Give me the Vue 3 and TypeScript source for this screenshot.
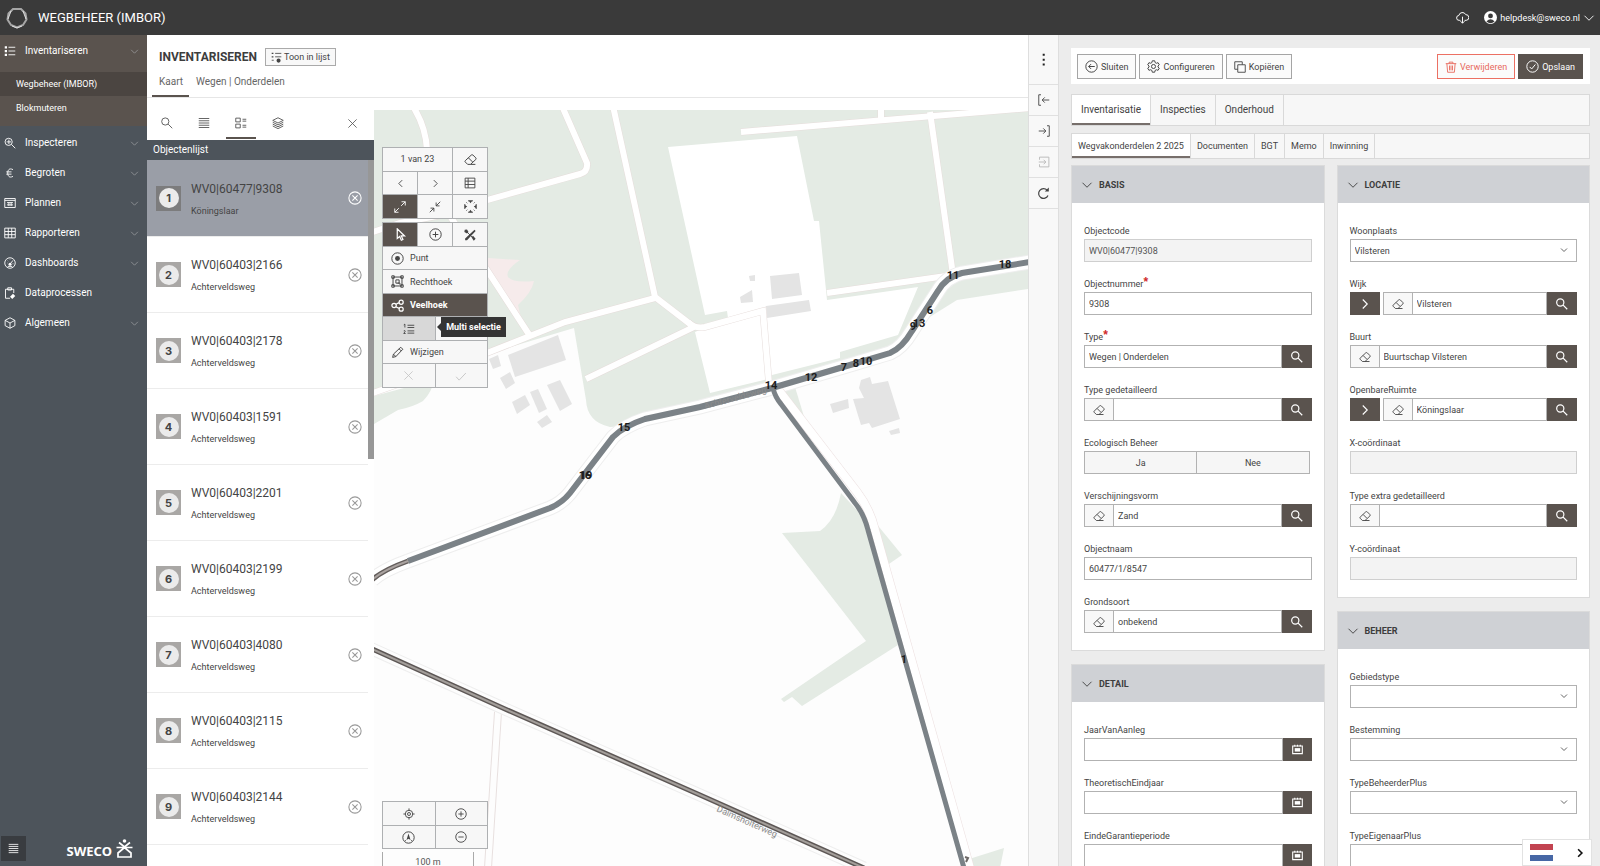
<script setup lang="ts">
import { h, ref } from 'vue'

type IconDef = { d: string; fill?: string }

const icons: Record<string, IconDef[]> = {
  list: [{ d: 'M6 3h9M6 8h9M6 13h9' }, { d: 'M1 1.500h3v3H1zM1 6.500h3v3H1zM1 11.500h3v3H1z', fill: 'currentColor' }],
  listdot: [{ d: 'M6 2h9M6 7h9M1 12h3' }, { d: 'M1 1h2.500v2H1zM1 6h2.500v2H1zM14 12.500a3 3 0 1 1-6 0a3 3 0 0 1 6 0', fill: 'currentColor' }],
  chevron: [{ d: 'M2 5l6 6 6-6' }],
  right: [{ d: 'M5 2l6 6-6 6' }],
  left: [{ d: 'M11 2L5 8l6 6' }],
  zoomplus: [{ d: 'M11 6.500a4.800 4.800 0 1 1-9.600 0a4.800 4.800 0 0 1 9.600 0M10 10l5 5M3.500 6.500h6M6.500 3.500v6' }],
  euro: [{ d: 'M12 3.500C7 1 5 4 5 8s2 7 7 4.500M3 6.500h7M3 9.500h7' }],
  calendar: [{ d: 'M1 3h14v11H1zM4 1v3M8 1v3M12 1v3' }, { d: 'M4 6h8v5H4z', fill: 'currentColor' }],
  plan: [{ d: 'M1 2h14v12H1zM1 4.500h14M4 7.500h8M4 10.500h8M6.500 7v5M9.500 7v5' }],
  grid: [{ d: 'M1 1.500h14v13H1zM1 6h14M1 10.200h14M5.700 1.500v13M10.300 1.500v13' }],
  gauge: [{ d: 'M15 8a7 7 0 1 1-14 0a7 7 0 0 1 14 0M8 9.500l4-5M4 8h.5M5 5l.5.5M8 3.500v.5M12.500 9h-1M5 12.500h6' }, { d: 'M10 9.500a2 2 0 1 1-4 0a2 2 0 0 1 4 0', fill: 'currentColor' }],
  clipboard: [{ d: 'M8 15H2V3h11v5M5 1h5v3H5z' }, { d: 'M8 13l4-4 3 3-4 4z', fill: 'currentColor' }],
  cube: [{ d: 'M8 1l6.500 3.500v7L8 15l-6.500-3.500v-7zM1.500 4.500L8 8l6.500-3.500M8 8v7' }],
  search: [{ d: 'M10.500 6a4.800 4.800 0 1 1-9.600 0a4.800 4.800 0 0 1 9.600 0M9.500 9.500L15 15' }],
  lines: [{ d: 'M1 2h14M1 5h14M1 8h14M1 11h14M1 14h14' }],
  cards: [{ d: 'M1 1.500h6v5H1zM1 9.500h6v5H1zM10 3h5M10 5.500h5M10 11h5M10 13.500h5' }],
  layers: [{ d: 'M8 1l7 3.500L8 8 1 4.500zM1 7l7 3.500L15 7M1 9.500L8 13l7-3.500M1 12l7 3.500 7-3.500' }],
  close: [{ d: 'M2 2l12 12M14 2L2 14' }],
  circlex: [{ d: 'M15 8a7 7 0 1 1-14 0a7 7 0 0 1 14 0M5 5l6 6M11 5l-6 6' }],
  circleplus: [{ d: 'M15 8a7 7 0 1 1-14 0a7 7 0 0 1 14 0M8 4.500v7M4.500 8h7' }],
  circleminus: [{ d: 'M15 8a7 7 0 1 1-14 0a7 7 0 0 1 14 0M4.500 8h7' }],
  circleleft: [{ d: 'M15 8a7 7 0 1 1-14 0a7 7 0 0 1 14 0M12 8H4.500M7.500 5l-3 3 3 3' }],
  circlecheck: [{ d: 'M15 8a7 7 0 1 1-14 0a7 7 0 0 1 14 0M4.500 8.500l2.500 2.500 4.500-5.500' }],
  eraser: [{ d: 'M1.500 9.500L9 2.500q1-.8 2 0l3.500 3.500q.8 1 0 2L8 14H4.500L1.500 11q-.8-.8 0-1.500M5.500 6l5 5M8 14h6' }],
  table: [{ d: 'M1.500 1.500h13v13h-13zM1.500 5.500h13M1.500 10h13M5.500 1.500v13' }],
  expand: [{ d: 'M9.500 6.500L15 1M10 1h5v5M6.500 9.500L1 15M1 10v5h5' }],
  shrink: [{ d: 'M9.500 6.500L15 1M9.500 2v4.500H14M6.500 9.500L1 15M2 9.500h4.500V14' }],
  extent: [{ d: 'M1 5v6M15 5v6M5 1h6M5 15h6M3 3l1 1M12 4l1-1M3 13l1-1M13 13l-1-1' }, { d: 'M6 1h4L8 4zM6 15h4L8 12zM1 6v4l3-2zM15 6v4l-3-2z', fill: 'currentColor' }],
  pointer: [{ d: 'M4 1v12l3-2.500 2 4.500 2-1-2-4.200h4z' }],
  tools: [{ d: 'M3 3l10 10' }, { d: 'M14 1l1.500 1.500L4 15H1.500v-2.500zM1 1l3-.5 2 3.500-2 2-3.500-2zM10 11l2-2 3.500 4-2.500 2.500z', fill: 'currentColor' }],
  point: [{ d: 'M15 8a7 7 0 1 1-14 0a7 7 0 0 1 14 0' }, { d: 'M11 8a3 3 0 1 1-6 0a3 3 0 0 1 6 0', fill: 'currentColor' }],
  rect: [{ d: 'M2.500 2.500h11v11h-11zM1 1h3v3H1zM12 1h3v3h-3zM1 12h3v3H1zM12 12h3v3h-3zM6 6h4v4H6zM8 10h3v2' }],
  poly: [{ d: 'M6.500 8a2.700 2.700 0 1 1-5.400 0a2.700 2.700 0 0 1 5.400 0M15 4a2.500 2.500 0 1 1-5 0a2.500 2.500 0 0 1 5 0M15 12.500a2.500 2.500 0 1 1-5 0a2.500 2.500 0 0 1 5 0M6 6.500l4-2M6 9.500l4 2' }],
  numlist: [{ d: 'M6 3h9M6 6h9M6 10.500h9M6 13.500h9M1 2.500l1.500-1V6M1 10.500q2-1 2 .5L1 14h2.500' }],
  pencil: [{ d: 'M2 14l1-4L12 1.500l2.500 2.500L6 13zM10 3.500L12.500 6M3 10l3 3' }],
  check: [{ d: 'M1.500 9l4 4.500L14.500 4' }],
  target: [{ d: 'M13 8a5 5 0 1 1-10 0a5 5 0 0 1 10 0M10 8a2 2 0 1 1-4 0a2 2 0 0 1 4 0M8 .5v3M8 12.500v3M.5 8h3M12.500 8h3' }],
  compass: [{ d: 'M15 8a7 7 0 1 1-14 0a7 7 0 0 1 14 0M5 11l-1 1M11 11l1 1' }, { d: 'M8 3l2.500 8L8 9.500 5.500 11z', fill: 'currentColor' }],
  gear: [{ d: 'M6.500 1h3l.5 2.200 1.500.8 2.100-.7 1.500 2.600-1.600 1.500v1.300l1.600 1.400-1.500 2.600-2.100-.7-1.500.8-.5 2.200h-3L6 12.800 4.500 12l-2.100.7L.9 10.100 2.500 8.700V7.400L.9 5.900l1.500-2.600L4.500 4 6 3.200zM10.500 8a2.500 2.500 0 1 1-5 0a2.500 2.500 0 0 1 5 0' }],
  copy: [{ d: 'M5 5h10v10H5zM11 5V1H1v10h4' }],
  trash: [{ d: 'M1 3.500h14M5.500 3.500v-2h5v2M2.500 3.500L3.500 15h9l1-11.500M6 6v6.500M8 6v6.500M10 6v6.500' }],
  dots: [{ d: 'M7 1h2.500v2.500H7zM7 7h2.500v2.500H7zM7 13h2.500v2.500H7z', fill: 'currentColor' }],
  outleft: [{ d: 'M4 1H1v14h3M15 8H6M9 4.500L5.500 8 9 11.500' }],
  inright: [{ d: 'M12 1h3v14h-3M1 8h9M7 4.500L10.500 8 7 11.500' }],
  boxright: [{ d: 'M2 5V1.500h12.500v13H2V11M1 8h9M7.500 5l3 3-3 3' }],
  reload: [{ d: 'M13.500 10.500A6 6 0 1 1 12.500 4' }, { d: 'M9.500 5.500h5v-5z', fill: 'currentColor' }],
  cloud: [{ d: 'M5.500 11.500H4a3 3 0 0 1-.5-6A4.500 4.500 0 0 1 12 4.500a3.500 3.500 0 0 1 .5 7h-2M8 7v8M5.500 12.500L8 15l2.500-2.500' }],
}

const Icon = (p: { name: string; size?: number; w?: number }) =>
  h(
    'svg',
    { viewBox: '0 0 16 16', width: p.size ?? 13, height: p.size ?? 13, fill: 'none', stroke: 'currentColor', 'stroke-width': p.w ?? 1.2, 'aria-hidden': 'true' },
    icons[p.name].map((s) => h('path', { d: s.d, fill: s.fill, stroke: s.fill ? 'none' : undefined })),
  )
Icon.props = ['name', 'size', 'w']

const menu = [
  { label: 'Inspecteren', icon: 'zoomplus', more: true },
  { label: 'Begroten', icon: 'euro', more: true },
  { label: 'Plannen', icon: 'plan', more: true },
  { label: 'Rapporteren', icon: 'grid', more: true },
  { label: 'Dashboards', icon: 'gauge', more: true },
  { label: 'Dataprocessen', icon: 'clipboard', more: false },
  { label: 'Algemeen', icon: 'cube', more: true },
]

const selected = ref(1)
const objects = [
  ['WV0|60477|9308', 'Köningslaar'],
  ['WV0|60403|2166', 'Achterveldsweg'],
  ['WV0|60403|2178', 'Achterveldsweg'],
  ['WV0|60403|1591', 'Achterveldsweg'],
  ['WV0|60403|2201', 'Achterveldsweg'],
  ['WV0|60403|2199', 'Achterveldsweg'],
  ['WV0|60403|4080', 'Achterveldsweg'],
  ['WV0|60403|2115', 'Achterveldsweg'],
  ['WV0|60403|2144', 'Achterveldsweg'],
].map(([code, street], i) => ({ nr: i + 1, code, street }))

const buildings = [
  '508,355 558,335 566,360 515,377', '489,359 498,355 501,366 493,369', '500,378 510,372 515,383 506,389',
  '512,402 525,395 530,405 517,414', '530,392 538,389 547,409 539,413', '547,385 560,380 572,404 560,411',
  '537,422 547,415 552,422 542,428', '770,276 799,273 802,295 772,299', '766,306 809,300 811,311 767,318',
  '749,276 755,275 755,281 750,281', '740,297 752,290 753,302 741,303',
  '861,380 870,377 872,384 888,381 900,419 872,428 869,423 861,425 853,399 864,398 859,388',
  '830,404 848,399 849,408 833,413', '889,431 899,428 900,433 891,435',
]
const lanes = [
  'M414 108Q426 128 427 150L432 190L487 270L530 336',
  'M370 233L400 223L452 213L487 200L580 174Q588 172 587 163L562 106',
  'M613 106L655 297L694 327L586 379',
  'M370 394L487 353L565 322L655 298',
  'M688 322Q695 329 705 327L763 311L769 384',
  'M741 132L1030 108',
  'M930 112L953 275',
  'M827 293L953 275',
  'M881 106V118',
]
const mainRoad = 'M408 561L550 508Q562 503 570 493L583 476L613 437Q624 426 645 419L700 407L772 388L850 365L890 353Q902 348 912 331L938 291Q946 277 962 273L1030 262'
const branch = 'M773 388Q775 397 781 404L855 503Q864 514 868 530L964 868'
const railway = 'M370 648L505 709L700 795L864 868'
const marks = [
  ['18', 1005, 264], ['11', 953, 275], ['6', 930, 310], ['13', 919, 323], ['9', 913, 326], ['10', 866, 361], ['8', 856, 363],
  ['7', 844, 367], ['12', 811, 377], ['14', 771, 385], ['15', 624, 427], ['19', 586, 475], ['16', 585, 475], ['1', 904, 659],
] as [string, number, number][]

type Field = { label: string; kind?: 'text' | 'select' | 'toggle' | 'date'; value?: string; required?: boolean; readonly?: boolean; clear?: boolean; go?: boolean; find?: boolean }
const basis: Field[] = [
  { label: 'Objectcode', value: 'WV0|60477|9308', readonly: true },
  { label: 'Objectnummer', value: '9308', required: true },
  { label: 'Type', value: 'Wegen | Onderdelen', required: true, find: true },
  { label: 'Type gedetailleerd', clear: true, find: true },
  { label: 'Ecologisch Beheer', kind: 'toggle' },
  { label: 'Verschijningsvorm', value: 'Zand', clear: true, find: true },
  { label: 'Objectnaam', value: '60477/1/8547' },
  { label: 'Grondsoort', value: 'onbekend', clear: true, find: true },
]
const detail: Field[] = [
  { label: 'JaarVanAanleg', kind: 'date' },
  { label: 'TheoretischEindjaar', kind: 'date' },
  { label: 'EindeGarantieperiode', kind: 'date' },
]
const locatie: Field[] = [
  { label: 'Woonplaats', kind: 'select', value: 'Vilsteren' },
  { label: 'Wijk', value: 'Vilsteren', go: true, clear: true, find: true },
  { label: 'Buurt', value: 'Buurtschap Vilsteren', clear: true, find: true },
  { label: 'OpenbareRuimte', value: 'Köningslaar', go: true, clear: true, find: true },
  { label: 'X-coördinaat', readonly: true },
  { label: 'Type extra gedetailleerd', clear: true, find: true },
  { label: 'Y-coördinaat', readonly: true },
]
const beheer: Field[] = [
  { label: 'Gebiedstype', kind: 'select' },
  { label: 'Bestemming', kind: 'select' },
  { label: 'TypeBeheerderPlus', kind: 'select' },
  { label: 'TypeEigenaarPlus', kind: 'select' },
]
const columns = [
  [{ title: 'BASIS', fields: basis }, { title: 'DETAIL', fields: detail }],
  [{ title: 'LOCATIE', fields: locatie }, { title: 'BEHEER', fields: beheer }],
]
const mainTabs = ['Inventarisatie', 'Inspecties', 'Onderhoud']
const subTabs = ['Wegvakonderdelen 2 2025', 'Documenten', 'BGT', 'Memo', 'Inwinning']
</script>

<template>
  <div class="app">
    <header class="topbar">
      <svg class="emblem" viewBox="0 0 22 22" width="22" height="22" fill="none" aria-hidden="true">
        <path d="M7 2h8l4.500 4.500 1 6-3.500 5.500-6 2.500L5 18l-3.500-5.500 1-6z" stroke="#a6a6a6" stroke-width="2" />
        <path d="M5 4l-3 8M17 4l3 8M6 19l5 2 5-2" stroke="#dedede" />
      </svg>
      <h1>WEGBEHEER (IMBOR)</h1>
      <button class="bare cloud" aria-label="Download"><Icon name="cloud" :size="13" /></button>
      <button class="bare user">
        <svg viewBox="0 0 16 16" width="13" height="13" aria-hidden="true"><circle cx="8" cy="8" r="8" fill="#fff" /><circle cx="8" cy="6" r="3" fill="#3a3a3a" /><path d="M3 13q5-6 10 0-5 4-10 0" fill="#3a3a3a" /></svg>
        <span>helpdesk@sweco.nl</span><Icon name="chevron" :size="12" />
      </button>
    </header>

    <div class="body">
      <nav class="side">
        <div class="open">
          <button class="item"><Icon name="list" :size="12" /><span>Inventariseren</span><Icon class="more" name="chevron" :size="9" /></button>
          <a href="#" class="sub on">Wegbeheer (IMBOR)</a>
          <a href="#" class="sub">Blokmuteren</a>
        </div>
        <button v-for="m in menu" :key="m.label" class="item">
          <Icon :name="m.icon" :size="12" /><span>{{ m.label }}</span><Icon v-if="m.more" class="more" name="chevron" :size="9" />
        </button>
        <div class="brand">
          <button class="collapse" aria-label="Menu"><Icon name="lines" :size="11" /></button>
          <span class="sweco">SWECO</span>
          <svg viewBox="0 0 17 19" width="17" height="19" fill="none" stroke="#fff" stroke-width="1.700" aria-hidden="true">
            <circle cx="8.500" cy="2" r="1.800" fill="#fff" stroke="none" />
            <path d="M3 3.500l5.500 4.500L14 3.500M.5 8.500h16M8.500 8.500L2 14v4h13v-4z" />
          </svg>
        </div>
      </nav>

      <main class="work">
        <div class="heading">
          <div class="title"><h2>INVENTARISEREN</h2><button class="tolist"><Icon name="listdot" :size="11" />Toon in lijst</button></div>
          <div class="tabs"><button class="on">Kaart</button><button>Wegen | Onderdelen</button></div>
        </div>
        <div class="split">
          <section class="objects">
            <div class="modes">
              <button aria-label="Zoeken"><Icon name="search" :size="12" /></button>
              <button aria-label="Lijst"><Icon name="lines" :size="12" /></button>
              <button class="on" aria-label="Objecten"><Icon name="cards" :size="12" /></button>
              <button aria-label="Lagen"><Icon name="layers" :size="12" /></button>
              <button class="shut" aria-label="Sluiten"><Icon name="close" :size="11" /></button>
            </div>
            <h3>Objectenlijst</h3>
            <div class="scroller">
              <ul>
                <li v-for="o in objects" :key="o.nr" :class="{ on: o.nr === selected }" @click="selected = o.nr">
                  <span class="nr"><b>{{ o.nr }}</b></span>
                  <span class="txt"><span class="code">{{ o.code }}</span><span class="street">{{ o.street }}</span></span>
                  <button class="bare" aria-label="Verwijder uit lijst"><Icon name="circlex" :size="14" /></button>
                </li>
              </ul>
              <div class="track"><div class="thumb"></div></div>
            </div>
          </section>

          <section class="map">
            <svg class="canvas" viewBox="374 110 654 756" preserveAspectRatio="xMinYMin slice">
              <rect x="374" y="110" width="654" height="756" fill="#fdfdfd" />
              <g fill="#e4ebe4">
                <path d="M374 110H1028V289L957 300L925 320L900 349L772 388L640 420Q630 427 610 427Q587 422 586 400L574 328L487 354L374 394Z" />
                <path d="M374 396L434 380Q432 392 423 401Q413 407 398 410L374 424Z" />
                <path d="M780 390L795 387L809 433Z" />
                <path d="M841 493Q836 520 820 531L782 533L866 641L781 699L784 702L792 697L802 706L898 645L866 520Z" />
                <path d="M870 516L902 555L886 566Z" />
                <path d="M966 860L1004 848L1000 868H968Z" />
              </g>
              <path d="M668 147L797 136L814 221H819L827 300L918 287L898 335L840 352V358L768 376V379L710 393L695 332L728 318L727 311L705 315Z" fill="#fff" />
              <path d="M488 258L520 260Q505 270 508 277Q513 283 534 281Q532 292 518 305L521 318Q505 295 488 268Z" fill="#f6ebeb" />
              <polygon v-for="b in buildings" :key="b" :points="b" fill="#e4e4e4" />
              <g fill="none" stroke="#e6dddb" stroke-width="7"><path v-for="l in lanes" :key="l" :d="l" /></g>
              <g fill="none" stroke="#fff" stroke-width="6"><path v-for="l in lanes" :key="l" :d="l" /></g>
              <g fill="none">
                <path d="M498 712L488 868" stroke="#e8e0df" stroke-width="8" /><path d="M498 712L488 868" stroke="#fdfdfd" stroke-width="6" />
                <path :d="mainRoad" stroke="#eee" stroke-width="15" /><path :d="mainRoad" stroke="#fff" stroke-width="13" />
                <path d="M372 580Q383 570 408 561" stroke="#eee" stroke-width="15" /><path d="M372 580Q383 570 408 561" stroke="#fff" stroke-width="13" />
                <path d="M777 388L857 492Q870 509 875 530L970 868" stroke="#ecdfdf" stroke-width="9" /><path d="M777 388L857 492Q870 509 875 530L970 868" stroke="#fff" stroke-width="8" />
                <path :d="mainRoad" stroke="#7b8287" stroke-width="6" />
                <path :d="branch" stroke="#7b8287" stroke-width="5" />
                <path d="M372 580Q383 570 408 561" stroke="#645e5c" stroke-width="5" /><path d="M372 580Q383 570 408 561" stroke="#aaa3a0" stroke-width="2" />
                <path :d="railway" stroke="#eee" stroke-width="13" /><path :d="railway" stroke="#fdfdfd" stroke-width="11" />
                <path :d="railway" stroke="#5d5755" stroke-width="5" /><path :d="railway" stroke="#a39e9a" stroke-width="2" />
                <path d="M965 857l3 1-2 4" stroke="#6d6866" stroke-width="2" />
              </g>
              <g class="road">
                <text x="705" y="409" transform="rotate(-15 705 409)">Achterveldsweg</text>
                <text x="716" y="811" transform="rotate(24 716 811)">Dalmsholterweg</text>
              </g>
              <text v-for="m in marks" :key="m[0]" class="mark" :x="m[1]" :y="m[2] + 4">{{ m[0] }}</text>
            </svg>

            <div class="tools">
              <div class="pad three">
                <span class="count">1 van 23</span><button aria-label="Wissen"><Icon name="eraser" /></button>
                <button aria-label="Vorige"><Icon name="left" :size="9" :w="1.6" /></button><button aria-label="Volgende"><Icon name="right" :size="9" :w="1.6" /></button><button aria-label="Tabel"><Icon name="table" :size="12" /></button>
                <button class="on" aria-label="Uitzoomen"><Icon name="expand" :size="12" /></button><button aria-label="Inzoomen"><Icon name="shrink" :size="12" /></button><button aria-label="Alles"><Icon name="extent" /></button>
              </div>
              <div class="pad six">
                <button class="on" aria-label="Selecteren"><Icon name="pointer" :w="1.5" /></button><button aria-label="Toevoegen"><Icon name="circleplus" /></button><button aria-label="Gereedschap"><Icon name="tools" :size="12" /></button>
                <button class="full"><Icon name="point" />Punt</button>
                <button class="full"><Icon name="rect" />Rechthoek</button>
                <button class="full on"><Icon name="poly" :w="1.5" />Veelhoek</button>
                <button class="half hot" aria-label="Multi selectie"><Icon name="numlist" :size="12" /></button><span class="half"></span>
                <button class="full"><Icon name="pencil" />Wijzigen</button>
                <button class="half off" aria-label="Annuleren"><Icon name="close" :size="11" /></button><button class="half off" aria-label="Bevestigen"><Icon name="check" :size="12" /></button>
              </div>
              <div class="tip">Multi selectie</div>
            </div>

            <div class="zoomer">
              <div class="pad two">
                <button aria-label="Locatie"><Icon name="target" :size="12" /></button><button aria-label="Zoom in"><Icon name="circleplus" :size="12" /></button>
                <button aria-label="Noord"><Icon name="compass" :size="13" /></button><button aria-label="Zoom uit"><Icon name="circleminus" :size="12" /></button>
              </div>
              <div class="scale">100 m</div>
            </div>
          </section>
        </div>
      </main>

      <div class="rail">
        <button class="tall" aria-label="Meer"><Icon name="dots" :w="1" /></button>
        <button aria-label="Paneel links"><Icon name="outleft" :size="12" /></button>
        <button aria-label="Paneel rechts"><Icon name="inright" :size="12" /></button>
        <button class="off" aria-label="Openen"><Icon name="boxright" :size="12" /></button>
        <button aria-label="Verversen"><Icon name="reload" :size="13" :w="1.5" /></button>
      </div>

      <aside class="form">
        <div class="actions">
          <button><Icon name="circleleft" />Sluiten</button>
          <button><Icon name="gear" />Configureren</button>
          <button><Icon name="copy" :size="12" />Kopiëren</button>
          <button class="danger"><Icon name="trash" :size="12" />Verwijderen</button>
          <button class="save"><Icon name="circlecheck" />Opslaan</button>
        </div>
        <div class="strip big"><button v-for="(t, i) in mainTabs" :key="t" :class="{ on: i === 0 }">{{ t }}</button></div>
        <div class="strip"><button v-for="(t, i) in subTabs" :key="t" :class="{ on: i === 0 }">{{ t }}</button></div>
        <div class="cols">
          <div v-for="(col, c) in columns" :key="c" class="col">
            <section v-for="p in col" :key="p.title" class="panel">
              <h4><Icon name="chevron" :size="12" />{{ p.title }}</h4>
              <div class="fields">
                <div v-for="f in p.fields" :key="f.label" class="field">
                  <label :for="f.label">{{ f.label }}<i v-if="f.required">*</i></label>
                  <div v-if="f.kind === 'toggle'" :id="f.label" class="toggle"><button>Ja</button><button>Nee</button></div>
                  <div v-else-if="f.kind === 'select'" class="pick">
                    <select :id="f.label"><option>{{ f.value }}</option></select><Icon name="chevron" :size="8" :w="2" />
                  </div>
                  <div v-else class="line">
                    <button v-if="f.go" class="dark go" aria-label="Ga naar"><Icon name="right" :size="12" :w="1.5" /></button>
                    <button v-if="f.clear" class="clear" aria-label="Leegmaken"><Icon name="eraser" :size="12" /></button>
                    <input :id="f.label" type="text" :value="f.value" :disabled="f.readonly" />
                    <button v-if="f.find" class="dark" aria-label="Zoeken"><Icon name="search" :size="12" :w="1.6" /></button>
                    <button v-if="f.kind === 'date'" class="dark date" aria-label="Kalender"><Icon name="calendar" :size="11" :w="1.6" /></button>
                  </div>
                </div>
              </div>
            </section>
          </div>
        </div>
      </aside>
    </div>
    <button class="lang" aria-label="Nederlands"><span class="flag"></span><Icon name="right" :size="10" :w="2.6" /></button>
  </div>
</template>

<style>
html, body { margin: 0; overflow: hidden; }
</style>

<style scoped>
.app { --brown: #5a534e; --line: #b2b2b2; position: relative; height: 100vh; display: flex; flex-direction: column; overflow: hidden; font-family: Roboto, 'Liberation Sans', sans-serif; font-size: 9px; line-height: 14px; color: #444; background: #fff; }
.app *, .app *::before { box-sizing: border-box; }
button { font: inherit; color: inherit; margin: 0; padding: 0; border: 0; border-radius: 0; background: none; display: flex; align-items: center; justify-content: center; cursor: pointer; }
svg { flex: none; display: block; }
h1, h2, h3, h4, ul { margin: 0; padding: 0; }

.topbar { flex: none; display: flex; align-items: center; height: 35px; padding: 0 5px 0 6px; background: #3a3a3a; color: #fff; }
.topbar h1 { flex: 1; margin-left: 10px; font-size: 13px; font-weight: 400; line-height: 20px; }
.cloud { margin-right: 15px; }
.user { gap: 3px; }

.body { flex: 1; min-height: 0; display: grid; grid-template-columns: 147px minmax(0, 1fr) 31px minmax(0, 541px); }
.side { display: flex; flex-direction: column; background: #4d545b; color: #fff; }
.open { background: var(--brown); padding-bottom: 6px; margin-bottom: 2px; }
.item { width: 100%; height: 30px; padding: 0 8px 0 4px; gap: 9px; font-size: 10px; justify-content: flex-start; }
.item span { flex: 1; text-align: left; }
.open .item { height: 32px; margin-bottom: 5px; }
.more { color: #a4a6a8; }
.sub { display: flex; align-items: center; height: 24px; padding-left: 16px; color: inherit; text-decoration: none; }
.sub.on { background: #4b4541; }
.brand { margin-top: auto; display: flex; align-items: center; padding: 0 14px 5px 1px; }
.collapse { width: 25px; height: 25px; background: #393c40; }
.sweco { margin-left: auto; margin-right: 4px; padding-top: 4px; font: 700 13px/16px 'Noto Sans', 'Open Sans', sans-serif; color: #fff; }

.work { display: flex; flex-direction: column; min-width: 0; min-height: 0; }
.heading { flex: none; padding: 13px 0 0 5px; border-bottom: 1px solid #e6e6e6; }
.title { display: flex; align-items: center; height: 18px; padding-left: 7px; gap: 8px; }
.title h2 { font-size: 12px; line-height: 18px; color: #3d3d3d; }
.tolist { gap: 2px; height: 18px; padding: 0 5px; border: 1px solid #aaa; background: #f8f8f8; }
.tabs { display: flex; font-size: 10px; padding-top: 6px; }
.tabs button { height: 25px; padding: 0 6px 3px 7px; color: #666; border-bottom: 2px solid transparent; }
.tabs .on { border-color: var(--brown); }
.split { flex: 1; min-height: 0; display: flex; }
.objects { flex: none; width: 227px; display: flex; flex-direction: column; min-height: 0; }
.modes { flex: none; display: flex; height: 42px; padding: 11px 7px 1px 5px; gap: 7px; color: #555; }
.modes button { width: 30px; border-bottom: 2px solid transparent; }
.modes .on { border-color: var(--brown); }
.modes .shut { margin-left: auto; }
.objects h3 { flex: none; height: 20px; padding-left: 6px; font-size: 10px; line-height: 19px; font-weight: 400; color: #fff; background: #4d545b; }
.scroller { flex: 1; min-height: 0; display: flex; overflow: hidden; }
.scroller ul { flex: 1; list-style: none; }
.track { width: 6px; }
.thumb { height: 299px; background: #979797; }
li { display: flex; align-items: center; height: 76px; padding: 0 6px 0 9px; border-bottom: 1px solid #ececec; color: #999; }
li.on { height: 77px; background: #9a9ea7; color: #fff; }
.nr { display: flex; align-items: center; justify-content: center; width: 25px; height: 25px; background: #a9a7a5; }
.on .nr { background: #7c7c7d; }
.nr b { width: 20px; height: 20px; border-radius: 50%; background: #ebebeb; color: #444; font: 700 11px/20px Inter, sans-serif; text-align: center; }
.txt { flex: 1; display: flex; flex-direction: column; gap: 7px; padding: 2px 0 0 10px; color: #444; }
.code { font-size: 12px; line-height: 16px; }

.map { position: relative; flex: 1; min-width: 0; margin-top: 12px; overflow: hidden; background: #fdfdfd; }
.canvas { position: absolute; top: 0; left: 0; width: 100%; height: 100%; }
.mark { font: 700 11px Roboto, sans-serif; fill: #1c1c1c; text-anchor: middle; }
.road { font-size: 9px; fill: #8c8c8c; }
.tools { position: absolute; top: 37px; left: 8px; width: 106px; display: grid; gap: 3px; }
.pad { display: grid; gap: 1px; padding: 1px; background: #aeb0b2; }
.pad > * { background: #f7f7f7; }
.three { grid-template: 23px 22px 23px / 1fr 1fr 1fr; }
.count { grid-column: span 2; text-align: center; line-height: 23px; }
.six { grid-template-columns: repeat(6, 1fr); grid-template-rows: 23px 22px 23px 22px 23px 22px 23px; }
.six > * { grid-column: span 2; }
.six .half { grid-column: span 3; }
.six .full { grid-column: span 6; justify-content: flex-start; padding-left: 8px; gap: 6px; }
.pad .on { background: var(--brown); color: #fff; }
.six .full.on { font-weight: 700; }
.pad .hot { background: #d8d8d8; }
.pad .off { color: #c4c4c4; }
.tip { position: absolute; top: 170px; left: 59px; height: 20px; width: 65px; background: #343434; color: #fff; font-weight: 700; line-height: 20px; text-align: center; white-space: nowrap; }
.tip::before { content: ''; position: absolute; left: -4px; top: 6px; border: 4px solid transparent; border-left: 0; border-right-color: #343434; }
.zoomer { position: absolute; left: 8px; bottom: 0; width: 106px; }
.two { grid-template: 23px 22px / 1fr 1fr; }
.scale { margin-top: 3px; width: 92px; height: 14px; border: 1px solid #aaa; border-width: 0 1px; line-height: 20px; text-align: center; color: #555; }

.rail { border-left: 1px solid #dedede; border-right: 1px solid #dedede; background: #f8f8f8; }
.rail button { width: 100%; height: 31px; border-bottom: 1px solid #e0e0e0; }
.rail .tall { height: 50px; color: #222; }
.rail .off { color: #b8b8b8; }

.form { display: flex; flex-direction: column; padding: 13px 10px 0 12px; background: #ececec; overflow: hidden; }
.actions { flex: none; display: flex; gap: 3px; height: 36px; padding: 6px 7px 5px 6px; background: #fff; }
.actions button { gap: 3px; padding: 0 7px; border: 1px solid #a5a5a5; background: #fbfbfb; white-space: nowrap; }
.actions .danger { margin-left: auto; border-color: #ec7063; color: #e8695c; }
.actions .save { background: var(--brown); border-color: var(--brown); color: #fff; }
.strip { flex: none; display: flex; height: 26px; margin-top: 7px; border: 1px solid #d9d9d9; background: #f7f7f7; }
.strip.big { height: 32px; margin-top: 10px; font-size: 10px; }
.strip button { padding: 0 6px; border-right: 1px solid #d9d9d9; white-space: nowrap; }
.strip.big button { padding: 0 9px; }
.strip .on { background: #fff; box-shadow: inset 0 -2px #776f6b; }
.cols { display: grid; grid-template-columns: 1fr 1fr; gap: 12px; margin-top: 6px; }
.col { display: grid; gap: 13px; align-content: start; min-width: 0; }
.panel { border: 1px solid #dbdbdb; background: #fff; }
.panel h4 { display: flex; align-items: center; gap: 6px; height: 37px; padding-left: 9px; background: #cfd1d5; font-size: 9px; color: #3d3d3d; }
.fields { padding: 21px 12px 2px; }
.field { height: 53px; }
.field label { display: block; height: 15px; line-height: 14px; white-space: nowrap; }
.field i { display: inline-block; height: 10px; vertical-align: top; color: #d02a2a; font: 700 12px/10px 'Liberation Sans', sans-serif; }
.line, .toggle, .pick { position: relative; display: flex; height: 23px; }
input, select { flex: 1; min-width: 0; width: 100%; margin: 0; height: 23px; padding: 0 4px; border: 1px solid var(--line); border-radius: 0; background: #fff; font: inherit; color: inherit; appearance: none; outline: 0; }
input:disabled { background: #f3f3f3; border-color: #cfcfcf; color: #555; }
.pick svg { position: absolute; right: 9px; top: 7px; color: #666; }
.clear { width: 30px; border: 1px solid var(--line); background: #f8f8f8; margin-right: -1px; }
.dark { width: 30px; background: var(--brown); color: #fff; }
.go { margin-right: 3px; }
.date { width: 29px; }
.toggle { padding-right: 2px; }
.toggle button { flex: 1; border: 1px solid var(--line); background: #f6f6f6; }
.toggle button + button { border-left: 0; }

.lang { position: absolute; right: 8px; bottom: 0; width: 70px; height: 27px; gap: 22px; background: #fff; border: 1px solid #e2e2e2; color: #111; }
.flag { width: 23px; height: 17px; background: linear-gradient(#c24350 0 6px, #fff 6px 11px, #4767a5 11px); }
</style>
